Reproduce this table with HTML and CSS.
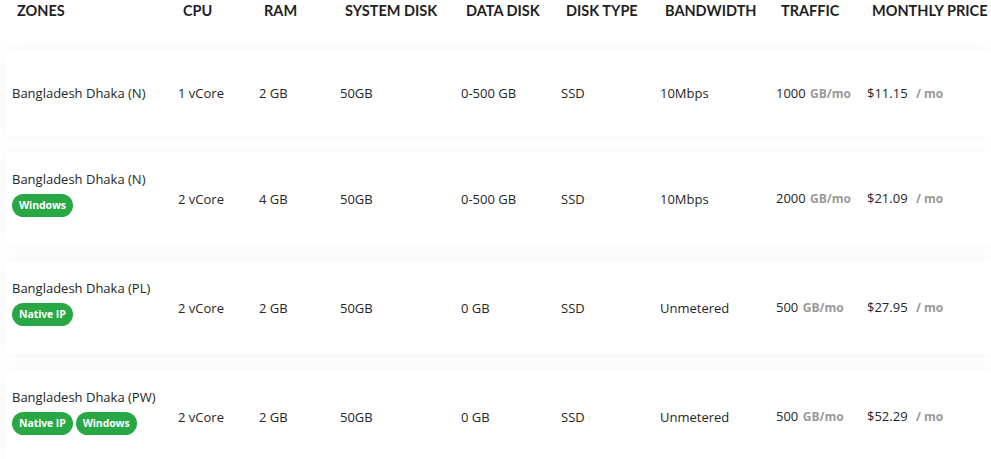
FILE: index.html
```html
<!DOCTYPE html>
<html>
<head>
<meta charset="utf-8">
<link rel="stylesheet" href="styles.css">
</head>
<body>
<div class="table">
  <div class="head">
    <div>ZONES</div><div>CPU</div><div>RAM</div><div>SYSTEM DISK</div><div>DATA DISK</div><div>DISK TYPE</div><div>BANDWIDTH</div><div>TRAFFIC</div><div>MONTHLY PRICE</div>
  </div>
  <div class="card">
    <div class="zone"><div class="name">Bangladesh Dhaka (N)</div></div>
    <div>1 vCore</div><div>2 GB</div><div>50GB</div><div>0-500 GB</div><div>SSD</div><div>10Mbps</div>
    <div>1000 <span class="unit">GB/mo</span></div>
    <div>$11.15 <span class="per">/ mo</span></div>
  </div>
  <div class="card">
    <div class="zone"><div class="name">Bangladesh Dhaka (N)</div><div class="badges"><span class="badge">Windows</span></div></div>
    <div>2 vCore</div><div>4 GB</div><div>50GB</div><div>0-500 GB</div><div>SSD</div><div>10Mbps</div>
    <div>2000 <span class="unit">GB/mo</span></div>
    <div>$21.09 <span class="per">/ mo</span></div>
  </div>
  <div class="card">
    <div class="zone"><div class="name">Bangladesh Dhaka (PL)</div><div class="badges"><span class="badge">Native IP</span></div></div>
    <div>2 vCore</div><div>2 GB</div><div>50GB</div><div>0 GB</div><div>SSD</div><div>Unmetered</div>
    <div>500 <span class="unit">GB/mo</span></div>
    <div>$27.95 <span class="per">/ mo</span></div>
  </div>
  <div class="card">
    <div class="zone"><div class="name">Bangladesh Dhaka (PW)</div><div class="badges"><span class="badge">Native IP</span><span class="badge">Windows</span></div></div>
    <div>2 vCore</div><div>2 GB</div><div>50GB</div><div>0 GB</div><div>SSD</div><div>Unmetered</div>
    <div>500 <span class="unit">GB/mo</span></div>
    <div>$52.29 <span class="per">/ mo</span></div>
  </div>
</div>
</body>
</html>
```
FILE: styles.css
```css
html, body {
  margin: 0;
  padding: 0;
  background: #ffffff;
  overflow: hidden;
}
.table {
  padding-left: 5px;
  display: flex;
  flex-direction: column;
  gap: 16px;
}
.head, .card {
  display: grid;
  grid-template-columns: 166px 81px 81px 121px 100px 99px 116px 91px 1fr;
}
.head {
  padding: 1px 0 0 12px;
  height: 34px;
  box-sizing: border-box;
  font-family: "Lato", sans-serif;
  font-weight: 700;
  font-size: 14.5px;
  line-height: 20px;
  color: #1f1f1f;
}
.card {
  background: #fff;
  border-radius: 6px 0 0 6px;
  box-shadow: 0 0 16px rgba(0, 0, 0, 0.045);
  min-height: 86px;
  box-sizing: border-box;
  padding: 18px 0 18px 7px;
  align-items: center;
  font-family: "Open Sans", sans-serif;
  font-size: 13px;
  line-height: 18px;
  color: #262626;
}
.badges {
  display: flex;
  gap: 3px;
  margin: 6px 0 10px;
}
.badge {
  display: inline-block;
  background: #28a745;
  color: #fff;
  font-weight: 700;
  font-size: 10.5px;
  line-height: 23px;
  height: 23px;
  padding: 0 7px;
  border-radius: 12px;
  letter-spacing: -0.1px;
}
.unit {
  color: #999;
  font-weight: 700;
  font-size: 12px;
  margin-left: 1px;
}
.per {
  color: #999;
  font-weight: 700;
  font-size: 12px;
  margin-left: 5px;
}
```
